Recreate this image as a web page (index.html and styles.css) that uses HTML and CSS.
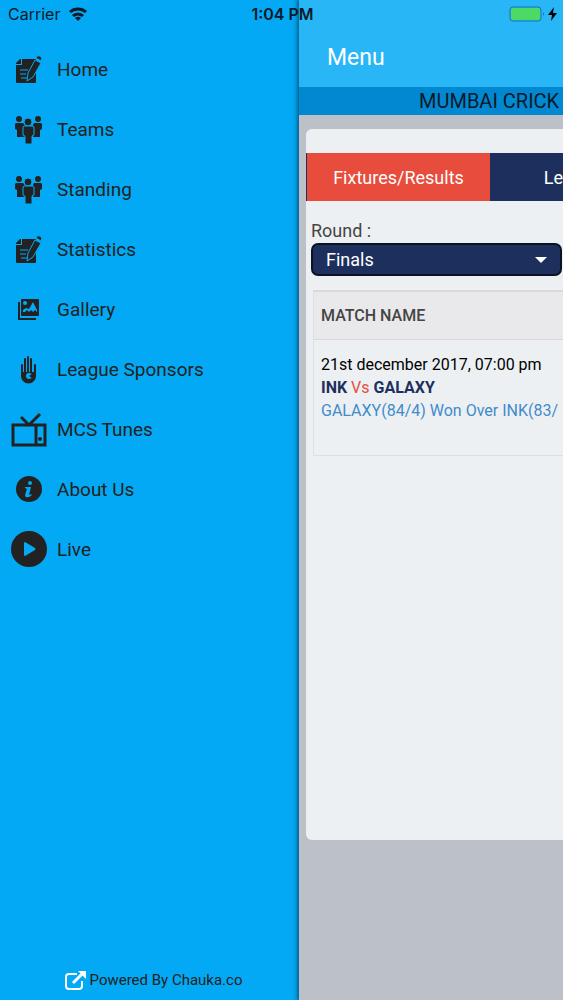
FILE: index.html
```html
<!DOCTYPE html>
<html lang="en">
  <head>
    <meta charset="utf-8">
    <meta name="viewport" content="width=device-width, initial-scale=1">
    <title>Menu</title>
    <link rel="stylesheet" href="styles.css">
  </head>
  <body>
    <!-- shared icons -->
    <svg class="icon-defs" aria-hidden="true">
      <symbol id="icon-note" viewBox="0 0 36 36">
        <path d="M11 8h14v23a1 1 0 0 1-1 1H6a1 1 0 0 1-1-1V14h6z" />
        <path d="M5 12l4-4h1v5H5z" />
        <path class="cut" d="M9 19h8M9 23h6M10 27h8" />
        <path class="outline" d="M24 9l6 3-8 14-6 4 1-8z" />
        <path class="outline" d="M25 7l1-2q3-1 5 2l-1 3z" />
      </symbol>
      <symbol id="icon-people" viewBox="0 0 36 36">
        <circle cx="8" cy="8" r="3" />
        <circle cx="27" cy="8" r="3" />
        <path d="M5 12h7l2 2v12H6v-7l-2-1v-5zM23 12h7l1 1v5l-2 1v7h-7V14z" />
        <circle class="outline" cx="17" cy="11" r="4" />
        <path class="outline" d="M13 15h9l1 1v8l-2 1v8h-7v-8l-2-1v-8z" />
      </symbol>
    </svg>

    <div class="status-bar">
      <div class="carrier">
        <span>Carrier</span>
        <svg class="wifi" viewBox="0 0 20 14" aria-hidden="true">
          <path d="M2 5a12 12 0 0 1 16 0M5 9a7 7 0 0 1 10 0" />
          <path class="dot" d="M10 14l-3-3a4 4 0 0 1 6 0z" />
        </svg>
      </div>
      <div class="time">1:04 PM</div>
      <div class="power">
        <svg class="battery" viewBox="0 0 36 16" aria-hidden="true">
          <rect class="case" x="1" y="1" width="31" height="14" rx="3" />
          <rect class="level" x="2" y="2" width="29" height="12" rx="2" />
          <path class="tip" d="M34 6q2 2 0 4z" />
        </svg>
        <svg class="bolt" viewBox="0 0 9 14" aria-hidden="true">
          <path d="M6 0L0 8h4l-1 6 6-8H5z" />
        </svg>
      </div>
    </div>

    <div class="app">
      <nav class="menu">
        <ul class="menu-list">
          <li><a href="#home"><svg class="icon"><use href="#icon-note" /></svg>Home</a></li>
          <li><a href="#teams"><svg class="icon"><use href="#icon-people" /></svg>Teams</a></li>
          <li><a href="#standing"><svg class="icon"><use href="#icon-people" /></svg>Standing</a></li>
          <li><a href="#statistics"><svg class="icon"><use href="#icon-note" /></svg>Statistics</a></li>
          <li>
            <a href="#gallery">
              <svg class="icon" viewBox="0 0 36 36">
                <path class="line" d="M8 11v17h17" />
                <rect x="10" y="8" width="18" height="17" rx="1" />
                <path class="hole" d="M12 21v-2l3-2 3 1 4-7 4 8v2l-2-2-2 2-2-2-2 2-2-2-2 2z" />
                <circle class="hole" cx="14" cy="12" r="2" />
              </svg>
              Gallery
            </a>
          </li>
          <li>
            <a href="#sponsors">
              <svg class="icon" viewBox="0 0 36 36">
                <path class="line" d="M11 14v11M14 8v15M17 6v15M20 8v15M24 14v10" stroke-linecap="round" />
                <path d="M10 21h15v4a7 7 0 0 1-15 0z" />
                <circle class="hole" cx="18" cy="25" r="3" />
                <path d="M18 25l3-2v4z" />
              </svg>
              League Sponsors
            </a>
          </li>
          <li>
            <a href="#tunes">
              <svg class="icon" viewBox="0 0 36 36">
                <path class="line thick" d="M2 14h32v20H2zM25 14v20M10 6l8 8L29 3" />
                <circle cx="29" cy="28" r="2" />
              </svg>
              MCS Tunes
            </a>
          </li>
          <li>
            <a href="#about">
              <svg class="icon" viewBox="0 0 36 36">
                <circle cx="18" cy="18" r="13" />
                <circle class="hole" cx="19" cy="12" r="2" />
                <path class="hole" d="M14 16h6l-2 8 3-1-1 2q-6 3-6-1l2-6-2-1z" />
              </svg>
              About Us
            </a>
          </li>
          <li>
            <a href="#live">
              <svg class="icon" viewBox="0 0 36 36">
                <circle cx="18" cy="18" r="18" />
                <path class="hole" d="M13 12q0-1 1-1l10 6q1 1 0 2l-10 6q-1 0-1-1z" />
              </svg>
              Live
            </a>
          </li>
        </ul>
        <a class="powered" href="#chauka">
          <svg class="external" viewBox="0 0 22 20" aria-hidden="true">
            <path d="M12 4H4a3 3 0 0 0-3 3v9a3 3 0 0 0 3 3h10a3 3 0 0 0 3-3v-5" />
            <path d="M8 13l9-9" stroke-width="3" />
            <path class="head" d="M13 1h8v8z" />
          </svg>
          Powered By Chauka.co
        </a>
      </nav>

      <main class="page">
        <header class="page-header">Menu</header>
        <h1 class="league">MUMBAI CRICK</h1>
        <section class="card">
          <div class="tabs">
            <button class="tab active" type="button">Fixtures/Results</button>
            <button class="tab" type="button">Le</button>
          </div>
          <div class="round">
            <label for="round">Round :</label>
            <div class="select-box">
              <select id="round">
                <option>Finals</option>
              </select>
              <svg class="arrow" viewBox="0 0 12 6" aria-hidden="true"><path d="M0 0h12L6 6z" /></svg>
            </div>
          </div>
          <table class="matches">
            <thead>
              <tr>
                <th>MATCH NAME</th>
              </tr>
            </thead>
            <tbody>
              <tr>
                <td>
                  <div class="date">21st december 2017, 07:00 pm</div>
                  <div class="teams"><b>INK</b> <span class="vs">Vs</span> <b>GALAXY</b></div>
                  <a class="result" href="#result">GALAXY(84/4) Won Over INK(83/</a>
                </td>
              </tr>
            </tbody>
          </table>
        </section>
      </main>
    </div>
  </body>
</html>
```
FILE: styles.css
```css
* {
  box-sizing: border-box;
}
body {
  margin: 0;
  font-family: Roboto, Arial, sans-serif;
  color: #222;
  background: #bcc0c8;
}
a {
  color: inherit;
  text-decoration: none;
}
.icon-defs {
  position: absolute;
  width: 0;
  height: 0;
}

/* status bar lies over both panes */
.status-bar {
  position: absolute;
  top: 0;
  left: 0;
  right: 0;
  z-index: 2;
  display: grid;
  grid-template-columns: 1fr auto 1fr;
  align-items: center;
  height: 28px;
  padding: 0 6px 0 8px;
  font-family: Inter, Roboto, sans-serif;
  font-size: 16px;
  color: #0a1a28;
}
.carrier,
.power {
  display: flex;
  align-items: center;
  gap: 8px;
}
.power {
  justify-content: flex-end;
  gap: 3px;
}
.time {
  font-weight: 600;
}
.wifi {
  width: 20px;
  height: 14px;
  fill: none;
  stroke: #0a1a28;
  stroke-width: 3;
}
.wifi .dot {
  fill: #0a1a28;
  stroke: none;
}
.battery {
  width: 36px;
  height: 16px;
}
.battery .case {
  fill: none;
  stroke: #1878ac;
}
.battery .level {
  fill: #4cd964;
}
.battery .tip {
  fill: #1878ac;
}
.bolt {
  width: 9px;
  height: 14px;
}

.app {
  display: flex;
  min-height: 100vh;
  overflow: hidden;
}

/* side menu */
.menu {
  flex: 0 0 299px;
  display: flex;
  flex-direction: column;
  justify-content: space-between;
  padding: 39px 0 8px;
  background: #03a9f4;
}
.menu-list {
  margin: 0;
  padding: 0;
  list-style: none;
}
.menu-list a {
  display: flex;
  align-items: center;
  gap: 10px;
  height: 60px;
  padding-left: 11px;
  font-size: 19px;
}
.icon {
  width: 36px;
  height: 36px;
  fill: #222;
}
.line {
  fill: none;
  stroke: #222;
  stroke-width: 2;
}
.line.thick {
  stroke-width: 3;
}
.cut {
  fill: none;
  stroke: #03a9f4;
  stroke-width: 1;
}
.outline {
  stroke: #03a9f4;
  stroke-width: 1;
}
.hole {
  fill: #03a9f4;
}
.powered {
  display: flex;
  align-items: center;
  justify-content: center;
  gap: 3px;
  padding-left: 8px;
  font-size: 15px;
  line-height: 24px;
}
.external {
  width: 22px;
  height: 20px;
  fill: none;
  stroke: #fff;
  stroke-width: 2;
}
.external .head {
  fill: #fff;
  stroke: none;
}

/* content page, pushed to the right by the menu */
.page {
  position: relative;
  flex: 1;
  min-width: 0;
  background: #bcc0c8;
  box-shadow: 0 0 5px 1px rgba(0, 40, 70, 0.8);
  white-space: nowrap;
}
.page-header {
  height: 87px;
  padding: 44px 28px 0;
  background: #29b6f6;
  color: #fff;
  font-size: 23px;
  line-height: 28px;
}
.league {
  margin: 0;
  padding-left: 120px;
  overflow: hidden;
  background: #0288d1;
  color: #0a1a28;
  font-size: 20px;
  font-weight: 400;
  line-height: 28px;
}
.card {
  min-height: 711px;
  margin: 14px 0 0 7px;
  padding-top: 24px;
  overflow: hidden;
  background: #ecf0f3;
  border-radius: 6px 0 0 6px;
}
.tabs {
  display: flex;
  padding-left: 1px;
  background: #1d305d;
}
.tab {
  flex: 0 0 183px;
  height: 48px;
  padding: 0;
  border: 0;
  background: #1d305d;
  color: #fff;
  font-family: inherit;
  font-size: 18px;
}
.tab.active {
  background: #e74c3c;
}
.tab:last-child {
  flex: 1;
  text-align: right;
}
.round {
  padding: 18px 1px 14px 5px;
  font-size: 18px;
  line-height: 24px;
}
.round label {
  display: block;
  color: #444;
}
.select-box {
  position: relative;
}
.select-box select {
  display: block;
  width: 100%;
  height: 33px;
  padding: 0 32px 0 13px;
  appearance: none;
  border: 2px solid #0b1224;
  border-radius: 7px;
  background: #1d305d;
  color: #fff;
  font-family: inherit;
  font-size: 18px;
}
.arrow {
  position: absolute;
  top: 14px;
  right: 15px;
  width: 12px;
  height: 6px;
  fill: #fff;
  pointer-events: none;
}
.matches {
  width: calc(100% - 7px);
  margin-left: 7px;
  border-collapse: collapse;
  border: 1px solid #dde0e2;
  border-right: 0;
  table-layout: fixed;
}
.matches th {
  height: 48px;
  padding: 0 7px;
  border-top: 2px solid #d8d9da;
  border-bottom: 1px solid #d8d9da;
  background: #e9e8ea;
  color: #444;
  font-size: 16px;
  font-weight: 500;
  text-align: left;
}
.matches td {
  height: 116px;
  padding: 13px 0 0 7px;
  font-size: 16px;
  line-height: 23px;
  vertical-align: top;
}
.date {
  color: #000;
}
.teams b {
  color: #1d305d;
}
.vs {
  color: #e74c3c;
}
.result {
  color: #428bca;
}
```
